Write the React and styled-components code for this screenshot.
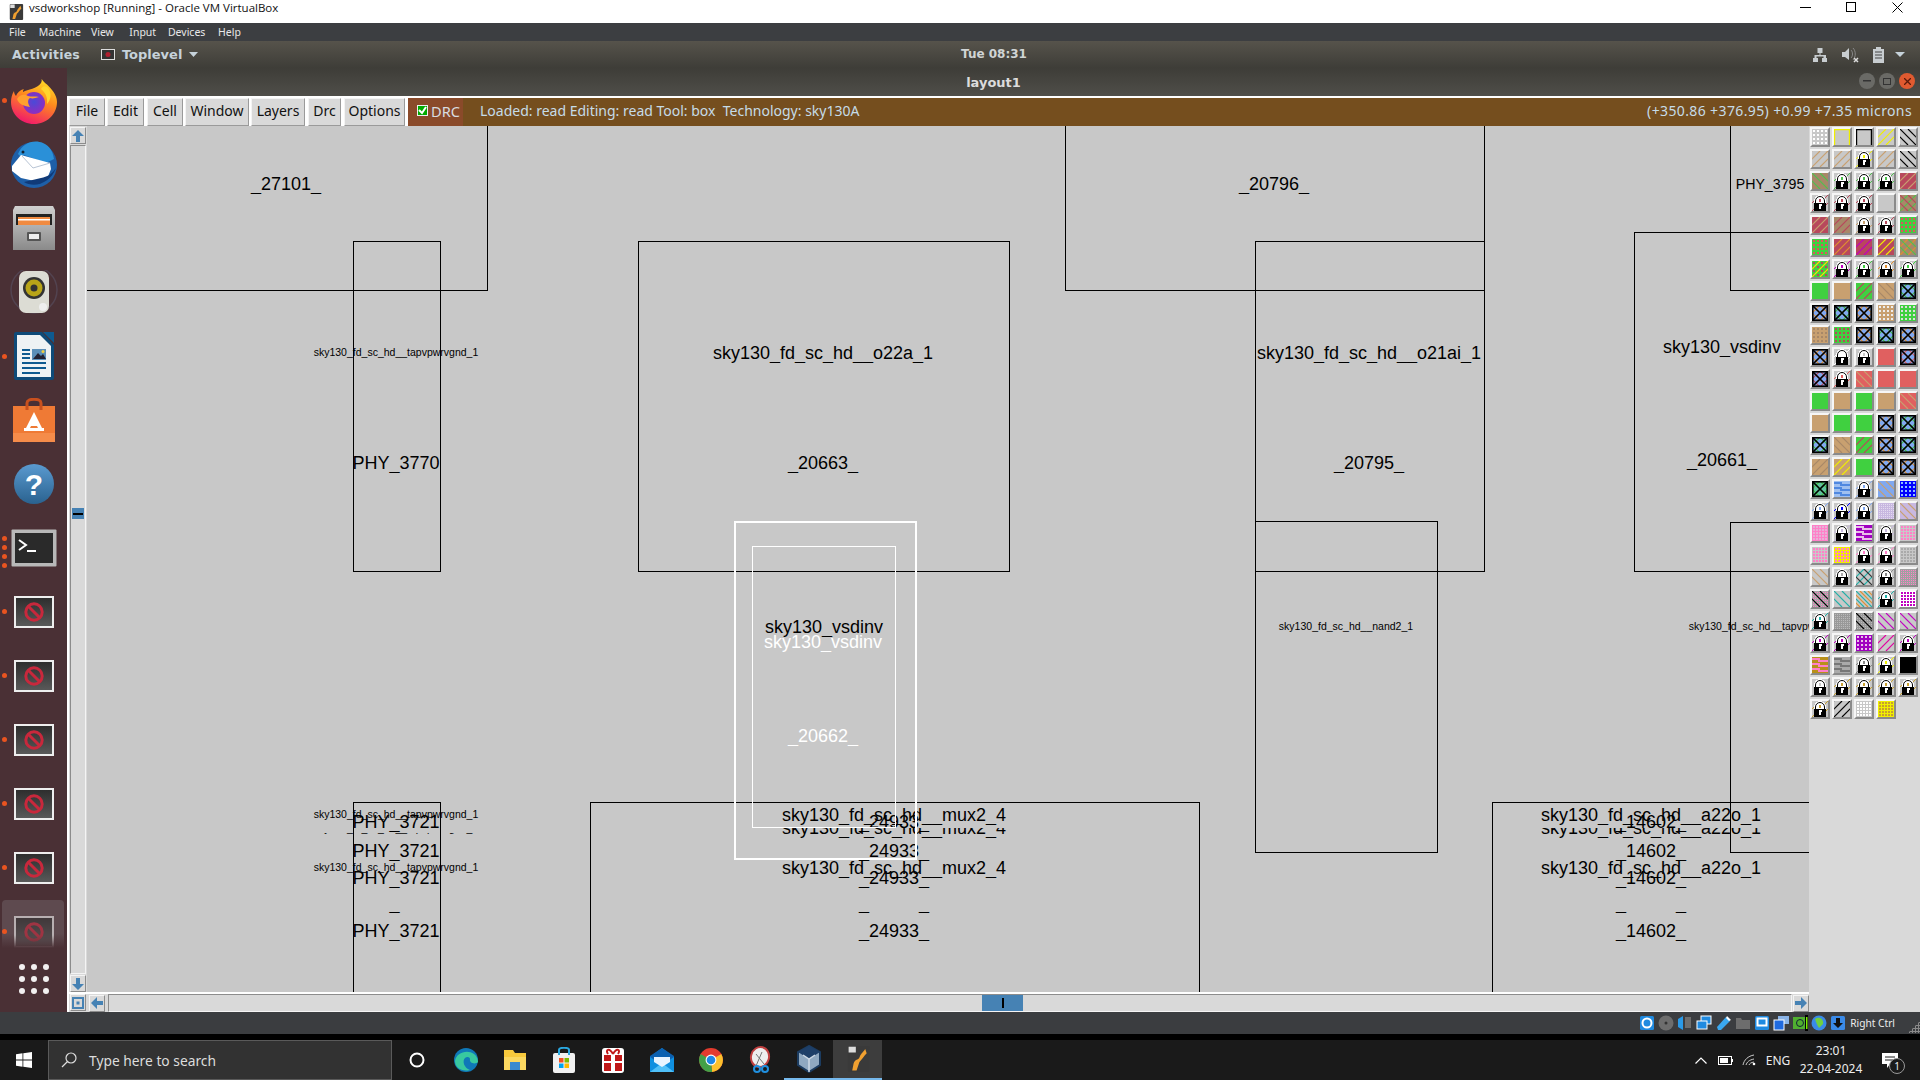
import React from 'react';
import styled, { createGlobalStyle } from 'styled-components';

const Global = createGlobalStyle`
  html, body { margin: 0; padding: 0; background: #000; }
  * { box-sizing: border-box; }
  body { width: 1920px; height: 1080px; overflow: hidden; font-family: "Noto Sans", sans-serif; }
`;
const Screen = styled.div`width:1920px;height:1080px;display:flex;flex-direction:column;overflow:hidden;`;

/* host title */
const HostBar = styled.div`height:23px;background:#fff;display:flex;align-items:center;padding-left:8px;color:#111;font:11.5px "Open Sans",sans-serif;`;
const HostTitle = styled.span`margin-left:5px;flex:1;margin-top:-8px;`;
const HostCtl = styled.div`width:46px;height:23px;display:flex;align-items:center;justify-content:center;margin-top:-8px;`;
const HostCtls = styled.div`display:flex;margin-right:0;`;

const GuestMenu = styled.div`height:18px;background:#3c3e41;display:flex;align-items:center;color:#e8e8e8;font:10.5px "Noto Sans",sans-serif;`;
const MenuItem = styled.span`position:relative;margin-left:${p => p.$m}px;`;

const GnomeBar = styled.div`height:27px;background:linear-gradient(#56534b,#3e3d38);display:flex;align-items:center;color:#c6d2da;position:relative;font:bold 13px "DejaVu Sans",sans-serif;`;
const Activities = styled.span`margin-left:12px;font-size:12.5px;letter-spacing:.2px;`;
const TopLevel = styled.div`margin-left:21px;display:flex;align-items:center;gap:7px;font-size:13px;`;
const Clock = styled.span`position:absolute;left:0;right:0;top:6px;text-align:center;font-size:12px;color:#d0d4d4;text-indent:68px;`;
const TopRight = styled.div`margin-left:auto;display:flex;align-items:center;gap:13px;margin-right:15px;`;
const Caret = styled.svg`margin-left:-3px;`;

const Body = styled.div`height:944px;display:flex;`;
const Dock = styled.div`width:67px;background:#4a3035;display:flex;flex-direction:column;`;
const DockItem = styled.div`height:64px;position:relative;display:flex;align-items:center;justify-content:center;`;
const ActiveWash = styled.div`position:absolute;left:2px;right:3px;top:0;height:48px;border-radius:4px 4px 0 0;background:linear-gradient(#5e4a4f 70%,#4a3035);`;
const DimIcon = styled.div`position:relative;display:flex;opacity:.62;mask-image:linear-gradient(#000 60%,transparent 100%);`;
const Pip = styled.i`position:absolute;left:2px;top:${p => p.$t}px;width:5px;height:5px;border-radius:50%;background:#e95420;`;
const AppGrid = styled.div`height:36px;margin-top:-3px;display:grid;grid-template-columns:repeat(3,6px);gap:6px;justify-content:center;align-content:center;`;
const AppDot = styled.i`width:6px;height:6px;border-radius:50%;background:#f2f0f0;`;

const Win = styled.div`flex:1;display:flex;flex-direction:column;min-width:0;`;
const WinTitle = styled.div`height:28px;background:linear-gradient(#3e3d38,#4f4e49);color:#dcdcdc;font:bold 13px "DejaVu Sans",sans-serif;display:flex;align-items:center;position:relative;justify-content:center;padding-right:0;`;
const WinBtns = styled.div`position:absolute;right:5px;top:5px;display:flex;gap:4px;`;
const WinBtn = styled.div`width:16px;height:16px;border-radius:50%;background:${p => p.$c};display:flex;align-items:center;justify-content:center;`;

const Toolbar = styled.div`height:30px;background:#fff;padding:2px 0 0 2px;display:flex;border-top:0;`;
const TBtn = styled.div`width:${p => p.$w}px;margin-right:${p => p.$m}px;height:28px;padding-bottom:3px;background:#d9d9d9;border:1px solid;border-color:#f4f4f4 #9a9a9a #9a9a9a #f4f4f4;display:flex;align-items:center;justify-content:center;color:#111;font:14px "Noto Sans",sans-serif;`;
const DrcBox = styled.div`width:55px;height:28px;padding:0 0 3px 9px;background:#8a4a2a;display:flex;align-items:center;gap:3px;color:#d8dde0;font:14.6px "Noto Sans",sans-serif;`;
const Check = styled.i`width:11px;height:11px;background:#0a0;border:1px solid #eee;display:flex;align-items:center;justify-content:center;`;
const Status = styled.div`flex:1;height:28px;background:#754e1e;display:flex;align-items:center;justify-content:space-between;padding:0 8px 3px 17px;color:#c6dce8;font:14px "Noto Sans",sans-serif;white-space:pre;`;
const Coords = styled.span`letter-spacing:.38px;`;

const Work = styled.div`flex:1;display:grid;grid-template-columns:20px 1722px 111px;grid-template-rows:866px 20px;background:#d9d9d9;`;
const VScroll = styled.div`border-left:2px solid #fff;padding:1px 2px 0 1px;display:flex;flex-direction:column;gap:1px;position:relative;`;
const SBtn = styled.div`width:16px;height:17px;flex:none;background:#d9d9d9;border:1px solid;border-color:#f4f4f4 #8c8c8c #8c8c8c #f4f4f4;display:flex;align-items:center;justify-content:center;`;
const VTrough = styled.div`flex:1;border:1px solid;border-color:#8c8c8c #f4f4f4 #f4f4f4 #8c8c8c;margin-right:-1px;position:relative;`;
const VThumb = styled.div`position:absolute;left:1px;right:1px;top:${p => p.$t}px;height:11px;background:#4682b4;display:flex;align-items:center;justify-content:center;`;
const Tick = styled.i`background:#000;width:${p => p.$w}px;height:${p => p.$h}px;`;
const Canvas = styled.div`position:relative;background:#c8c8c8;overflow:hidden;`;
const Box = styled.div`position:absolute;left:${p => p.$x - 87}px;top:${p => p.$y - 126}px;width:${p => p.$w}px;height:${p => p.$h}px;border:${p => p.$b || 1}px solid ${p => p.$c || '#000'};`;
const Lab = styled.span`position:absolute;left:${p => p.$x - 87}px;top:${p => p.$y - 126}px;transform:translate(-50%,-50%);line-height:20px;height:20px;white-space:nowrap;font:${p => p.$s || 18}px/20px "Liberation Sans",sans-serif;color:${p => p.$c || '#000'};clip-path:inset(${p => p.$clip || 0}px -5px 0 -5px);`;
const Palette = styled.div`grid-column:3;grid-row:1 / span 2;padding:1px 0 0 1px;display:grid;grid-template-columns:repeat(5,20px);grid-auto-rows:20px;gap:2px 2.1px;align-content:start;`;
const Tile = styled.div`width:20px;height:20px;border:2px solid;border-color:#f6f6f6 #8a8a8a #8a8a8a #f6f6f6;background:#c8c8c8;svg{display:block;}`;
const HScroll = styled.div`grid-column:2;display:flex;align-items:center;border-top:2px solid #fff;padding-left:2px;gap:0;height:20px;`;
const HTrough = styled.div`flex:1;height:18px;border:1px solid;border-color:#8c8c8c #f4f4f4 #f4f4f4 #8c8c8c;margin:0 1px 0 3px;position:relative;`;
const HThumb = styled.div`position:absolute;left:873px;top:0;bottom:0;width:41px;background:#4682b4;display:flex;align-items:center;justify-content:center;`;
const Corner = styled.div`grid-column:1;border-left:2px solid #fff;border-top:2px solid #fff;padding:0 0 0 1px;`;

const VBoxStatus = styled.div`height:22px;background:#3b3d40;display:flex;align-items:center;justify-content:flex-end;padding-right:25px;gap:3.1px;color:#eee;font:10.2px "Noto Sans",sans-serif;position:relative;`;
const Grip = styled.div`position:absolute;right:0;bottom:1px;width:12px;height:12px;background:radial-gradient(circle,#8a8a8a 1px,transparent 1.2px) 0 0/3px 3px;clip-path:polygon(100% 0,100% 100%,0 100%);`;
const RightCtrl = styled.span`margin-left:1px;`;
const Black = styled.div`height:6px;background:#000;`;

const Taskbar = styled.div`height:40px;background:#1a1a1a;display:flex;align-items:center;position:relative;color:#eee;`;
const StartBtn = styled.div`width:48px;display:flex;justify-content:center;`;
const Search = styled.div`width:344px;height:40px;background:#323232;border:1px solid #5a5a5a;display:flex;align-items:center;padding-left:11px;gap:11px;color:#ddd;font:13.8px "Noto Sans",sans-serif;`;
const TaskIcon = styled.div`width:49px;height:40px;display:flex;align-items:center;justify-content:center;position:relative;background:${p => p.$active ? '#3d3d3d' : 'transparent'};border-bottom:${p => p.$open ? '2px solid #76b9ed' : '0'};`;
const Tray = styled.div`margin-left:auto;display:flex;align-items:center;height:40px;font:12px "Noto Sans",sans-serif;`;
const TrayIcon = styled.div`width:${p => p.$w || 24}px;display:flex;justify-content:center;`;
const ClockBox = styled.div`width:70px;margin-left:1px;text-align:center;line-height:18px;font-size:12px;`;
const Notif = styled.div`width:38px;margin-left:5px;margin-right:11px;position:relative;display:flex;justify-content:center;`;
const NotifBadge = styled.b`position:absolute;left:18px;top:5px;width:16px;height:16px;border-radius:50%;background:#1a1a1a;border:1px solid #999;font:10px/14px "Noto Sans";text-align:center;`;

/* ---- palette ---- */
const G = '#c8c8c8', GR = '#40d040', TN = '#c8a070', BR = '#a88868', RD = '#b8485c', CO = '#e06060', BL = '#80a8f0', LV = '#c8b8e0', PK = '#ff80c8', PU = '#a000c0', MG = '#c000c0', TE = '#20b0a8', DP = '#0000ff', YE = '#f0f000', OR = '#e09030';
const h = (bg, ...lines) => ({ bg, lines });
const k = (c) => ({ lock: c });
const d = (bg, dot, s) => ({ bg, dot, s });
const x = (c, bg) => ({ bg: bg || BL, cross: true, lines: c ? [['\\', c], ['/', c]] : [] });
const TILES = [
  d(G,'#fff'), {bg:G,frame:YE}, {bg:G,frame:'#000'}, h(G,['/',YE]), h(G,['\\','#000']),
  h(G,['/',TN]), h(G,['/',TN]), k(YE), h(G,['/',TN]), h(G,['\\','#000']),
  h(BR,['\\','#50c050']), k('#50c050'), k('#50c050'), k('#50c050'), h(RD,['/',TN]),
  k(RD), k(RD), k(RD), h(G), h(BR,['/','#50c050'],['\\',RD]),
  h(RD,['/',TN]), h(BR,['/',RD]), k(TN), k(RD), d(GR,'#e05060'),
  d(GR,'#e05060'), h(RD,['/',OR]), h(RD,['/',MG]), h(RD,['/',YE]), h(BR,['/',OR],['\\','#50c050']),
  {bg:GR,lines:[['/',YE]],dot:RD}, k(MG), k(GR), k(OR), k(GR),
  h(GR), h(TN), h(GR,['/',RD]), h(TN,['\\',BR]), x('#40c040'),
  x(OR), x('#40c040'), x(OR), d(TN,'#eee'), d(GR,'#ddd'),
  d(TN,BR), d(GR,RD), x(OR), x('#40c040'), x(OR),
  x(OR), k('#fff'), k(G), h(CO), x(CO),
  x(RD), k(CO), h(CO,['\\',TN]), h(CO), h(CO),
  h(GR), h(TN), h(GR), h(TN), h(CO,['\\',TN]),
  h(TN), h(GR), h(GR), x(TN), x('#40c040'),
  x('#40c040'), h(TN,['\\',BR]), h(GR,['/',RD]), x(OR), x('#40c040'),
  h(TN,['/',BR]), h(TN,['/',YE]), h(GR), x(OR), x(OR),
  x('#40c040','#60c0a0'), {bg:'#a0c0f0',wave:'#5088e0'}, k(BL), h(BL,['\\',TN]), d(DP,'#90c0ff',4),
  k(BL), k(DP), k(BL), d(LV,'#e4dcf0',2), h(LV,['\\',TN]),
  d(PK,'#e8b0d8',3), k(LV), {bg:PU,wave:'#e8c0e8'}, k(LV), d(G,PK,3),
  d(G,PK,3), d(YE,PK,3), k(PK), k(PK), d(G,'#aaa',3),
  h(G,['\\',TN]), k('#aaa'), {bg:G,cross2:true,lines:[['/',TE],['\\','#333']]}, k('#888'), d('#a0a0a0',PK,2),
  {bg:'#a8a8a8',lines:[['\\','#000']],dot:PK,s:2}, h(G,['\\',TE]), h(G,['\\',TE],['\\',OR,4]), k(TE), d('#fff',MG,3),
  k(TE), d('#999','#bbb',2), {bg:'#999',lines:[['\\','#000']],dot:'#bbb',s:2}, h(G,['\\',MG]), h(G,['\\',MG]),
  k(MG), k(MG), {bg:PU,dot:'#e8c0e8',s:4}, h(G,['/','#e000a0']), k(MG),
  {bg:'#b8901a',wave:PK}, {bg:'#aaa',wave:'#777'}, k('#888'), k(YE), {bg:'#000'},
  k(G), k('#c8a030'), k('#c8a030'), k('#c8a030'), k('#c8a030'),
  k('#c8a030'), h(G,['/','#000']), d(G,'#fff',3), d(YE,'#c8a030',3),
];

const hatch = (dir, c, off = 0, i = 0) => {
  const o = [];
  for (let a = -16 + off; a < 16; a += 8) {
    o.push(dir === '/'
      ? <line key={a} x1={a} y1={16} x2={a + 16} y2={0} stroke={c} strokeWidth="1.2" />
      : <line key={a} x1={a} y1={0} x2={a + 16} y2={16} stroke={c} strokeWidth="1.2" />);
  }
  return <g key={dir + c + i}>{o}</g>;
};
const TileArt = ({ t }) => {
  if (t.lock) {
    return (
      <svg width="16" height="16" viewBox="0 0 16 16" shapeRendering="crispEdges">
        <rect width="16" height="16" fill="#c8c8c8" />
        {hatch('/', t.lock)}
        <path d="M2 9V6a6 6 0 0 1 12 0v3z" fill="#fff" />
        <path d="M3.5 8V6a4.5 4.5 0 0 1 9 0v2" fill="none" stroke="#000" shapeRendering="auto" />
        <rect x="7" y="3.5" width="2" height="3" fill={t.lock} />
        <rect x="2" y="8" width="12" height="8" fill="#000" />
        <rect x="6.5" y="9" width="3" height="2" fill="#fff" />
        <rect x="7.4" y="11" width="1.4" height="3" fill="#fff" />
      </svg>
    );
  }
  const dots = [];
  if (t.dot) {
    const s = t.s || 4;
    for (let a = 1; a < 16; a += s) for (let b = 1; b < 16; b += s) {
      dots.push(<rect key={a + '-' + b} x={a} y={b} width={s > 2 ? 2 : 1} height={s > 2 ? 2 : 1} fill={t.dot} />);
    }
  }
  return (
    <svg width="16" height="16" viewBox="0 0 16 16">
      <rect width="16" height="16" fill={t.bg} />
      <g shapeRendering="crispEdges">{dots}</g>
      {t.wave && [2, 7, 12].map(y => <path key={y} d={`M0 ${y}h7v2h9`} stroke={t.wave} strokeWidth="2" fill="none" />)}
      {(t.lines || []).map((l, i) => hatch(l[0], l[1], l[2] || 0, i))}
      {t.frame && <path d="M.5 16V.5h15V16" fill="none" stroke={t.frame} strokeWidth="1.4" />}
      {t.cross && <g fill="none" stroke="#000" strokeWidth="1.6"><rect x=".8" y=".8" width="14.4" height="14.4" /><path d="M1 1l14 14M15 1L1 15" /></g>}
    </svg>
  );
};

/* ---- canvas data ---- */
const BOXES = [
  { x: 60, y: 100, w: 428, h: 191 }, { x: 353, y: 241, w: 88, h: 331 }, { x: 638, y: 241, w: 372, h: 331 },
  { x: 1065, y: 100, w: 420, h: 191 }, { x: 1255, y: 241, w: 230, h: 331 }, { x: 1255, y: 521, w: 183, h: 332 },
  { x: 1634, y: 232, w: 300, h: 340 }, { x: 1730, y: 100, w: 300, h: 191 }, { x: 1730, y: 522, w: 300, h: 331 },
  { x: 353, y: 802, w: 88, h: 300 }, { x: 590, y: 802, w: 610, h: 300 }, { x: 1492, y: 802, w: 500, h: 300 },
];
const SM = 10.5;
const LABELS = [
  ['_27101_', 286, 184], ['_20796_', 1274, 184], ['PHY_3795', 1770, 184, 14.2],
  ['sky130_fd_sc_hd__tapvpwrvgnd_1', 396, 352, SM], ['PHY_3770', 396, 463],
  ['sky130_fd_sc_hd__o22a_1', 823, 353], ['_20663_', 823, 463],
  ['sky130_fd_sc_hd__o21ai_1', 1369, 353], ['_20795_', 1369, 463],
  ['sky130_vsdinv', 1722, 347], ['_20661_', 1722, 460],
  ['sky130_vsdinv', 824, 627], ['sky130_vsdinv', 823, 642, 18, '#fff'], ['_20662_', 823, 736, 18, '#fff'],
  ['sky130_fd_sc_hd__nand2_1', 1346, 626, SM], ['sky130_fd_sc_hd__tapvpwrvgnd_1', 1771, 626, SM],
  ['sky130_fd_sc_hd__tapvpwrvgnd_1', 396, 814, SM], ['sky130_fd_sc_hd__tapvpwrvgnd_1', 396, 867, SM],
  ['sky130_fd_sc_hd__tapvpwrvgnd_1', 396, 828, SM, '#000', 15],
];
['PHY_3721|396', '_24933_|894', '_14602_|1651'].forEach(e => {
  const [t, px] = e.split('|'); const X = +px;
  [822, 851, 878, 931].forEach(y => LABELS.push([t, X, y]));
  LABELS.push([t, X, 903, 18, '#000', 17]);
});
[['sky130_fd_sc_hd__mux2_4', 894], ['sky130_fd_sc_hd__a22o_1', 1651]].forEach(([t, X]) => {
  LABELS.push([t, X, 815], [t, X, 868], [t, X, 828, 18, '#000', 10]);
});

/* ---- icons ---- */
const Arrow = ({ r = 0 }) => (
  <svg width="14" height="14" viewBox="0 0 14 14" style={{ transform: `rotate(${r}deg)` }}>
    <path d="M7 1l6 6H9v6H5V7H1z" fill="#4682b4" />
  </svg>
);
const Firefox = () => (
  <svg width="46" height="47" viewBox="0 0 46 47">
    <defs>
      <linearGradient id="ff" x1="0.7" y1="0" x2="0.3" y2="1"><stop offset="0" stopColor="#ffe226" /><stop offset=".45" stopColor="#ff8a1e" /><stop offset="1" stopColor="#f0146e" /></linearGradient>
      <radialGradient id="fp" cx=".5" cy=".45"><stop offset="0" stopColor="#4a4ad8" /><stop offset="1" stopColor="#8b2fc0" /></radialGradient>
    </defs>
    <path d="M30 0c1 5 7 7 11 13 4 5 5 9 5 12 0 12-10 22-23 22S0 37 0 25c0-4 1-8 3-11 0 2 1 4 2 5 1-3 4-6 8-7-1 1-1 2-1 3 5-3 14-3 18-9 1-2 1-4 0-6z" fill="url(#ff)" />
    <circle cx="23" cy="26" r="11" fill="url(#fp)" />
    <path d="M6 22c3-5 8-5 11-3 3 1 8 0 11 1-4 1-6 2-9 1-3 2-2 6 0 9-7-1-11-3-13-8z" fill="#ffa02e" />
    <path d="M30 12c4 3 7 8 6 15 4-4 5-11 1-16-2-2-5-3-7 1z" fill="#ffd52e" />
  </svg>
);
const Bird = () => (
  <svg width="48" height="48" viewBox="0 0 48 48">
    <circle cx="24" cy="25" r="23" fill="#1e5fa8" />
    <path d="M8 14C12 3 24-1 33 3c7 3 10 9 11 16l-8 4-22-8-4 1z" fill="#2a90d8" />
    <path d="M2 26l9-11 29 8 1 6-4 10-8 3-18-4-9-7z" fill="#fff" />
    <path d="M12 16l11 12 17-5" fill="none" stroke="#b8c4d4" strokeWidth="1" />
    <circle cx="13" cy="12" r="1.500" fill="#123" />
    <path d="M14 42c10 6 26 2 32-14-4 6-9 9-15 10z" fill="#103a78" />
  </svg>
);
const Cabinet = () => (
  <svg width="42" height="44" viewBox="0 0 42 44">
    <defs><linearGradient id="cb" x1="0" y1="0" x2="0" y2="1"><stop offset="0" stopColor="#d0d0d0" /><stop offset="1" stopColor="#8a8a8a" /></linearGradient></defs>
    <path d="M2 0h38l2 4v40H0V4z" fill="url(#cb)" />
    <rect x="3" y="8" width="36" height="11" fill="#222" />
    <rect x="5" y="11" width="32" height="8" fill="#f08a40" /><rect x="5" y="13" width="32" height="1.500" fill="#fff" />
    <rect x="14" y="26" width="14" height="9" rx="1" fill="#555" /><rect x="16" y="28" width="10" height="5" fill="#eee" />
  </svg>
);
const Speaker = () => (
  <svg width="48" height="44" viewBox="0 0 48 44">
    <circle cx="24" cy="20" r="23" fill="none" stroke="#5e5a70" strokeWidth="1.5" opacity=".45" />
    <rect x="9" y="1" width="30" height="42" rx="7" fill="#dcdcd4" />
    <circle cx="24" cy="18" r="11" fill="#333" /><circle cx="24" cy="18" r="8.5" fill="#b8a418" /><circle cx="24" cy="18" r="3.5" fill="#333" />
    <circle cx="33" cy="37" r="4" fill="#eee" />
  </svg>
);
const Writer = () => (
  <svg width="40" height="48" viewBox="0 0 40 48">
    <path d="M2 0h26l12 13v33a2 2 0 0 1-2 2H2a2 2 0 0 1-2-2V2a2 2 0 0 1 2-2z" fill="#0e4a78" />
    <path d="M3 3h23l11 11v31H3z" fill="#eef2f4" />
    <path d="M29 0h11v11z" fill="#0e5a90" />
    <path d="M8 18h8M8 22h8M8 26h8M8 31h24M8 36h24M8 41h18" stroke="#0e5a90" strokeWidth="2" />
    <rect x="18" y="17" width="14" height="11" fill="#5b8fb8" /><path d="M19 27l5-6 3 3 2-2 3 5z" fill="#223" /><circle cx="29" cy="19.5" r="1.5" fill="#f0d040" />
  </svg>
);
const Bag = () => (
  <svg width="42" height="44" viewBox="0 0 42 44">
    <rect x="0" y="8" width="42" height="36" fill="#ef7a35" />
    <path d="M14 12V5c0-5 14-5 14 0v7" fill="none" stroke="#c8501e" strokeWidth="3" />
    <rect x="0" y="35" width="42" height="9" fill="#f58c4a" />
    <path d="M21 14l9 18h-4l-2-4h-6l-2 4h-4z" fill="#fff" /><rect x="11" y="30" width="20" height="3" fill="#fff" />
  </svg>
);
const Blocked = () => (
  <svg width="40" height="32" viewBox="0 0 40 32">
    <defs><linearGradient id="bk" x1="0" y1="0" x2="0" y2="1"><stop offset="0" stopColor="#2c2c2c" /><stop offset="1" stopColor="#5a5a5a" /></linearGradient></defs>
    <rect x="1" y="1" width="38" height="30" fill="url(#bk)" stroke="#eee" strokeWidth="2" />
    <circle cx="20" cy="16" r="8.2" fill="none" stroke="#c8283c" strokeWidth="3" /><path d="M14 10l12 12" stroke="#c8283c" strokeWidth="3" />
  </svg>
);
const Terminal = () => (
  <svg width="46" height="38" viewBox="0 0 46 38">
    <rect x="0.5" y="0.5" width="45" height="37" fill="#b8b8b8" rx="1" /><rect x="4" y="4" width="38" height="30" fill="#2a2a2a" />
    <path d="M8 11l7 5-7 5" fill="none" stroke="#fff" strokeWidth="2" /><path d="M16 22h9" stroke="#fff" strokeWidth="2" />
  </svg>
);
const HelpIcon = () => (
  <svg width="40" height="40" viewBox="0 0 40 40">
    <defs><linearGradient id="hp" x1="0" y1="0" x2="0" y2="1"><stop offset="0" stopColor="#5a9ad0" /><stop offset="1" stopColor="#2a628f" /></linearGradient></defs>
    <circle cx="20" cy="20" r="20" fill="url(#hp)" />
    <text x="20" y="31" textAnchor="middle" fontFamily="Liberation Sans" fontWeight="bold" fontSize="30" fill="#fff">?</text>
  </svg>
);
const WinLogo = () => (
  <svg width="16" height="16" viewBox="0 0 16 16"><path d="M0 2.2l6.5-.9v6.3H0zM7.3 1.2L16 0v7.6H7.3zM0 8.4h6.5v6.3L0 13.8zM7.3 8.4H16V16l-8.7-1.2z" fill="#fff" /></svg>
);
const VMIcon = ({ s = 18 }) => (
  <svg width={s} height={s} viewBox="0 0 18 18">
    <rect x="2" y="0" width="15" height="18" rx="1" fill="#3a3a3a" />
    <path d="M14 2c-2 3-3 3-4 6-1 2-3 1-4 4l-1 5h3l2-6c2-2 4-5 5-6z" fill="#f0a030" />
    <rect x="2.5" y="0.5" width="5" height="4" fill="#ddd" />
  </svg>
);
const Sq = ({ c, children }) => (
  <svg width="16" height="16" viewBox="0 0 16 16"><rect x="1" y="1" width="14" height="14" rx="1.5" fill={c} />{children}</svg>
);

const DOCK = [
  [<Firefox />, [30]], [<Bird />], [<Cabinet />], [<Speaker />], [<Writer />, [30]], [<Bag />],
  [<HelpIcon />], [<Terminal />, [20, 29, 38, 47]],
];
const TOOL = [['File', 36, 2], ['Edit', 37, 3], ['Cell', 36, 2], ['Window', 64, 2], ['Layers', 54, 3], ['Drc', 33, 3], ['Options', 61, 3]];
const MENUS = [['File', 9], ['Machine', 13], ['View', 10], ['Input', 15.5], ['Devices', 11.8], ['Help', 12.7]];

const TASK = [
  <svg width="18" height="18" viewBox="0 0 18 18"><circle cx="9" cy="9" r="6.5" fill="none" stroke="#fff" strokeWidth="2" /></svg>,
  <svg width="26" height="26" viewBox="0 0 26 26"><circle cx="13" cy="13" r="12" fill="#0f78b8" /><path d="M2 14C3 6 14 2 21 7c3 2 4 6 4 8-3 3-9 1-8-3 0-2-3-3-5-1-3 3-1 10 5 12-8 2-15-2-15-9z" fill="#38c8a0" /></svg>,
  <svg width="24" height="22" viewBox="0 0 24 22"><path d="M1 1h9l2 3h11v17H1z" fill="#f8c93c" /><path d="M1 8h22v13H1z" fill="#fbd860" /><rect x="7" y="13" width="10" height="8" fill="#3a8ad0" /></svg>,
  <svg width="22" height="26" viewBox="0 0 22 26"><rect x="0" y="6" width="22" height="20" rx="2" fill="#f0f0f0" /><path d="M6 8V3c0-3 10-3 10 0v5" fill="none" stroke="#2aa8e0" strokeWidth="2" /><rect x="6" y="11" width="4.500" height="4.500" fill="#f25022" /><rect x="11.500" y="11" width="4.500" height="4.500" fill="#7fba00" /><rect x="6" y="16.500" width="4.500" height="4.500" fill="#00a4ef" /><rect x="11.500" y="16.500" width="4.500" height="4.500" fill="#ffb900" /></svg>,
  <svg width="24" height="28" viewBox="0 0 24 28"><rect x="1" y="2" width="22" height="25" rx="3" fill="#fff" /><rect x="3" y="9" width="18" height="16" fill="#c01818" /><path d="M10 9h4v16h-4zM3 15h18v2H3z" fill="#fff" /><path d="M12 8C8 1 4 4 7 8M12 8c4-7 8-4 5 0" fill="none" stroke="#c01818" strokeWidth="2" /></svg>,
  <svg width="24" height="24" viewBox="0 0 24 24"><path d="M12 0l12 9v15H0V9z" fill="#1090e0" /><path d="M0 9l12 8 12-8v-1L12 0 0 8z" fill="#0a60b0" /><path d="M0 24l12-9 12 9z" fill="#50c0f8" /><path d="M4 9h16v5l-8 5-8-5z" fill="#e8f4ff" /></svg>,
  <svg width="26" height="26" viewBox="0 0 48 48"><circle cx="24" cy="24" r="22" fill="#e33b2e" /><path d="M24 24L43 13A22 22 0 0 1 26 46z" fill="#fbc02d" /><path d="M24 24l2 22A22 22 0 0 1 5 13z" fill="#43a047" /><circle cx="24" cy="24" r="10" fill="#fff" /><circle cx="24" cy="24" r="8" fill="#1e88e5" /></svg>,
  <svg width="24" height="28" viewBox="0 0 24 28"><ellipse cx="12" cy="11" rx="9" ry="10" fill="#eee" stroke="#c04040" strokeWidth="2" transform="rotate(15 12 11)" /><path d="M8 20l6-14M8 8l8 10" stroke="#777" /><circle cx="9" cy="23" r="3" fill="none" stroke="#2090e0" strokeWidth="2" /><circle cx="17" cy="23" r="3" fill="none" stroke="#2090e0" strokeWidth="2" /></svg>,
  <svg width="26" height="28" viewBox="0 0 26 28"><path d="M13 1l11 6v13l-11 7-11-7V7z" fill="#8fa8c0" stroke="#1c3c60" strokeWidth="2" /><path d="M13 1l11 6-11 7L2 7z" fill="#1e3f68" /><path d="M13 14v13M7 10l6 4 6-4" stroke="#cdd8e4" strokeWidth="1.5" fill="none" /></svg>,
];

const STAT = [
  <Sq c="#1f8ae0"><circle cx="8" cy="8" r="4.5" fill="none" stroke="#fff" strokeWidth="2" /></Sq>,
  <svg width="16" height="16" viewBox="0 0 16 16"><circle cx="8" cy="8" r="7.500" fill="#6d6d6d" /><circle cx="8" cy="8" r="1.500" fill="#333" /></svg>,
  <svg width="16" height="16" viewBox="0 0 16 16"><path d="M1 4l5-3v14l-5-3z" fill="#2a9ae8" /><rect x="8" y="2" width="6" height="11" fill="#6d6d6d" /></svg>,
  <svg width="16" height="16" viewBox="0 0 16 16"><rect x="5" y="1" width="10" height="8" fill="#1f8ae0" stroke="#fff" /><rect x="1" y="6" width="10" height="8" fill="#1f8ae0" stroke="#fff" /></svg>,
  <svg width="16" height="16" viewBox="0 0 16 16"><path d="M1 12L10 2l4 4-9 9H2z" fill="#3aa8f0" /><path d="M11 1l4 4-2 1-3-3z" fill="#fff" /></svg>,
  <svg width="16" height="16" viewBox="0 0 16 16"><path d="M1 3h5l1 2h8v9H1z" fill="#6d6d6d" /></svg>,
  <Sq c="#1f8ae0"><rect x="3.500" y="3.500" width="9" height="7" fill="none" stroke="#fff" strokeWidth="2" /></Sq>,
  <svg width="16" height="16" viewBox="0 0 16 16"><rect x="5" y="1" width="11" height="8" fill="#8ab4e8" /><rect x="1" y="5" width="10" height="10" fill="#1f6ae0" stroke="#fff" /></svg>,
  <svg width="16" height="16" viewBox="0 0 16 16"><rect x="1" y="2" width="14" height="12" fill="#50b030" /><circle cx="8" cy="8" r="3.500" fill="none" stroke="#123" /><rect x="13" y="0" width="3" height="16" fill="#000" /><rect x="14" y="2" width="1.500" height="12" fill="#7bf000" /></svg>,
  <svg width="16" height="16" viewBox="0 0 16 16"><circle cx="8" cy="8" r="7.500" fill="#3a8ae8" /><path d="M4 4c4-3 9 0 8 5l-4 4c-2-3-3-6-4-9z" fill="#70d040" /></svg>,
  <Sq c="#3a8ae8"><path d="M6 3h4v5h3l-5 5-5-5h3z" fill="#111" /></Sq>,
];

export default function App() {
  return (
    <Screen>
      <Global />
      <HostBar>
        <VMIcon s={16} />
        <HostTitle>vsdworkshop [Running] - Oracle VM VirtualBox</HostTitle>
        <HostCtls>
          <HostCtl><svg width="11" height="11"><path d="M0 5.500h11" stroke="#000" /></svg></HostCtl>
          <HostCtl><svg width="11" height="11"><rect x=".5" y=".5" width="9" height="9" fill="none" stroke="#000" /></svg></HostCtl>
          <HostCtl><svg width="11" height="11"><path d="M.5.5l10 10M10.500.5l-10 10" stroke="#000" /></svg></HostCtl>
        </HostCtls>
      </HostBar>
      <GuestMenu>{MENUS.map(([t, m]) => <MenuItem key={t} $m={m}>{t}</MenuItem>)}</GuestMenu>
      <GnomeBar>
        <Activities>Activities</Activities>
        <TopLevel>
          <svg width="14" height="11"><rect x=".5" y=".5" width="13" height="10" fill="#333" stroke="#ddd" /><circle cx="7" cy="5.500" r="2.500" fill="#b02030" /></svg>
          Toplevel
          <svg width="9" height="5"><path d="M0 0h9L4.500 5z" fill="#c6d2da" /></svg>
        </TopLevel>
        <Clock>Tue 08:31</Clock>
        <TopRight>
          <svg width="16" height="16" viewBox="0 0 16 16"><path d="M5.500 1h5v5h-2v2h5.500v3H15v4h-5v-4h1.500V9.500h-7V11H6v4H1v-4h1.500V8H7.500V6h-2z" fill="#c8cdd0" /></svg>
          <svg width="18" height="16" viewBox="0 0 18 16"><path d="M1 5h3l4-4v12l-4-3H1z" fill="#c8cdd0" /><path d="M10 3c2 2 2 6 0 8M12 1c3 3 3 9 0 12" stroke="#888" fill="none" /><path d="M13 11l4 4m0-4l-4 4" stroke="#ddd" strokeWidth="1.500" /></svg>
          <svg width="13" height="16" viewBox="0 0 13 16"><path d="M4 0h5v2h3v14H1V2h3z" fill="#c8cdd0" /><path d="M3 5h7M3 8h7M3 11h7" stroke="#444" /></svg>
          <Caret width="10" height="5"><path d="M0 0h10L5 5z" fill="#c6d2da" /></Caret>
        </TopRight>
      </GnomeBar>
      <Body>
        <Dock>
          {DOCK.map(([icon, pips], i) => (
            <DockItem key={i}>{icon}{(pips || []).map(t => <Pip key={t} $t={t} />)}</DockItem>
          ))}
          {[0, 1, 2, 3, 4].map(i => (
            <DockItem key={i}>
              <Blocked />
              <Pip $t={29} />
            </DockItem>
          ))}
          <DockItem>
            <ActiveWash />
            <DimIcon><Blocked /></DimIcon>
            <Pip $t={29} />
          </DockItem>
          <AppGrid>{Array.from({ length: 9 }).map((_, i) => <AppDot key={i} />)}</AppGrid>
        </Dock>
        <Win>
          <WinTitle>
            layout1
            <WinBtns>
              <WinBtn $c="#6a6a66"><svg width="8" height="2"><rect width="8" height="1.500" fill="#333" /></svg></WinBtn>
              <WinBtn $c="#6a6a66"><svg width="8" height="7"><rect x=".5" y=".5" width="7" height="6" fill="none" stroke="#333" /></svg></WinBtn>
              <WinBtn $c="#e05a30"><svg width="7" height="7"><path d="M0 0l7 7M7 0L0 7" stroke="#5a1a0a" strokeWidth="1.300" /></svg></WinBtn>
            </WinBtns>
          </WinTitle>
          <Toolbar>
            {TOOL.map(([t, w, m]) => <TBtn key={t} $w={w} $m={m}>{t}</TBtn>)}
            <DrcBox>
              <Check><svg width="9" height="9"><path d="M1 4l3 3 4-6" fill="none" stroke="#fff" strokeWidth="2" /></svg></Check>
              DRC
            </DrcBox>
            <Status>
              <span>Loaded: read Editing: read Tool: box  Technology: sky130A</span>
              <Coords>(+350.86 +376.95) +0.99 +7.35 microns</Coords>
            </Status>
          </Toolbar>
          <Work>
            <VScroll>
              <SBtn><Arrow /></SBtn>
              <VTrough><VThumb $t={362}><Tick $w={10} $h={2} /></VThumb></VTrough>
              <SBtn><Arrow r={180} /></SBtn>
            </VScroll>
            <Canvas>
              {BOXES.map((b, i) => <Box key={i} $x={b.x} $y={b.y} $w={b.w} $h={b.h} />)}
              {LABELS.map(([t, X, Y, s, c, clip], i) => <Lab key={i} $x={X} $y={Y} $s={s} $c={c} $clip={clip}>{t}</Lab>)}
              <Box $x={734} $y={521} $w={183} $h={339} $b={2} $c="#fff" />
              <Box $x={752} $y={546} $w={144} $h={282} $c="#fff" />
            </Canvas>
            <Palette>{TILES.map((t, i) => <Tile key={i}><TileArt t={t} /></Tile>)}</Palette>
            <Corner><SBtn><svg width="12" height="12"><rect x="1" y="1" width="10" height="10" fill="none" stroke="#4682b4" strokeWidth="2" /><rect x="4.500" y="4.500" width="3" height="3" fill="#4682b4" /></svg></SBtn></Corner>
            <HScroll>
              <SBtn><Arrow r={-90} /></SBtn>
              <HTrough><HThumb><Tick $w={2} $h={10} /></HThumb></HTrough>
              <SBtn><Arrow r={90} /></SBtn>
            </HScroll>
          </Work>
        </Win>
      </Body>
      <VBoxStatus>
        {STAT.map((s, i) => <React.Fragment key={i}>{s}</React.Fragment>)}
        <RightCtrl>Right Ctrl</RightCtrl>
        <Grip />
      </VBoxStatus>
      <Black />
      <Taskbar>
        <StartBtn><WinLogo /></StartBtn>
        <Search>
          <svg width="18" height="18" viewBox="0 0 18 18"><circle cx="11" cy="7" r="5" fill="none" stroke="#ddd" strokeWidth="1.200" /><path d="M7.500 10.500L2 16" stroke="#ddd" strokeWidth="1.200" /></svg>
          Type here to search
        </Search>
        {TASK.map((ic, i) => <TaskIcon key={i} $open={i === 8}>{ic}</TaskIcon>)}
        <TaskIcon $active $open><VMIcon s={26} /></TaskIcon>
        <Tray>
          <TrayIcon><svg width="12" height="7"><path d="M.5 6.500L6 1l5.500 5.500" fill="none" stroke="#fff" strokeWidth="1.200" /></svg></TrayIcon>
          <TrayIcon><svg width="15" height="9"><rect x=".5" y=".5" width="13" height="8" fill="none" stroke="#fff" /><rect x="2" y="2" width="8" height="5" fill="#fff" /><rect x="14" y="3" width="1" height="3" fill="#fff" /></svg></TrayIcon>
          <TrayIcon><svg width="14" height="12" viewBox="0 0 14 12"><path d="M1 11C2 6 6 2 12 1M4 11c1-3 3-5 8-6M7 11c.5-1.500 2-2.500 5-3" fill="none" stroke="#ccc" /><circle cx="12" cy="10" r="1.300" fill="#fff" /></svg></TrayIcon>
          <TrayIcon $w={34}>ENG</TrayIcon>
          <ClockBox><div>23:01</div><div>22-04-2024</div></ClockBox>
          <Notif>
            <svg width="16" height="15" viewBox="0 0 16 15"><path d="M0 0h16v11H8l-3 4v-4H0z" fill="#fff" /><path d="M3 4h10M3 7h10" stroke="#1a1a1a" /></svg>
            <NotifBadge>1</NotifBadge>
          </Notif>
        </Tray>
      </Taskbar>
    </Screen>
  );
}
